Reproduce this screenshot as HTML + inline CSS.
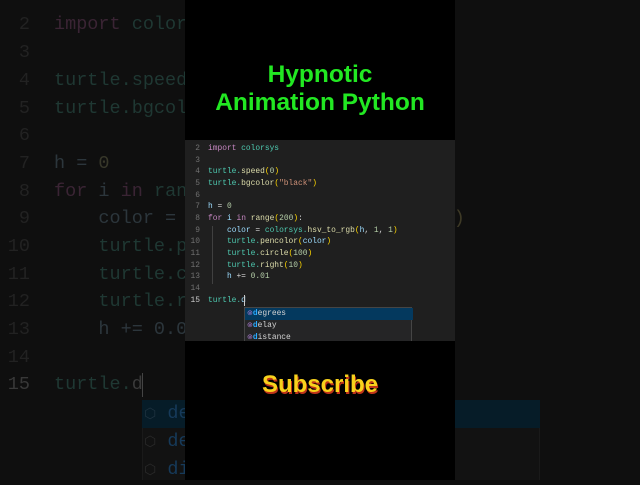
<!DOCTYPE html>
<html><head><meta charset="utf-8"><style>
*{margin:0;padding:0;box-sizing:border-box}
body{width:640px;height:480px;overflow:hidden;background:#0e0e0e;position:relative;font-family:"Liberation Mono",monospace}
.bg{position:absolute;left:0;top:0;width:640px;height:480px;background:#0f0f0f}
.bl{position:absolute;font-size:18.5px;line-height:28px;white-space:pre;height:28px}
.bn{left:0;width:30px;text-align:right;color:#222}
.bc{left:54px;color:#1f3833}
.ck{color:#3a2434}
.cw{color:#2c363c}
.cn{color:#38382a}
.cy{color:#3e3a26}
.col{position:absolute;left:185px;top:0;width:270px;height:480px;background:#000}
.panel{position:absolute;left:185px;top:140px;width:270px;height:201px;background:#1f1f1f;overflow:hidden}
.l{position:absolute;font-size:7.9px;line-height:11.7px;white-space:pre;height:12px}
.n{left:0;width:15px;text-align:right;color:#707070}
.c{left:23px;color:#4ec9b0}
.k{color:#c586c0}
.w{color:#9cdcfe}
.f{color:#dcdcaa}
.s{color:#ce9178}
.nu{color:#b5cea8}
.p{color:#ffd700}
.t{color:#d4d4d4}
.ac{position:absolute;left:59px;top:167px;width:168px;height:40px;background:#252526;border:1px solid #454545}
.ar{position:absolute;left:0;width:168px;height:12px;font-size:7.9px;line-height:12px;color:#d4d4d4;padding-left:2px}
.ar b{color:#2aaaff;font-weight:bold}
.ar i{font-style:normal;color:#b180d7;font-size:7px}
.title{position:absolute;left:185px;width:270px;text-align:center;font-family:"Liberation Sans",sans-serif;font-weight:bold;font-size:24.5px;color:#22e822;line-height:28px}
.sub{position:absolute;left:185px;top:371px;width:270px;text-align:center;font-family:"Liberation Sans",sans-serif;font-weight:bold;font-size:24px;color:#f8d21c;text-shadow:1px 2px 0 #c0341a}
</style></head><body>
<div class="bg">
<div class="bl bn" style="top:11px">2</div><div class="bl bc" style="top:11px"><span class="ck">import</span> colorsys</div>
<div class="bl bn" style="top:39px">3</div>
<div class="bl bn" style="top:67px">4</div><div class="bl bc" style="top:67px">turtle.speed(0)</div>
<div class="bl bn" style="top:95px">5</div><div class="bl bc" style="top:95px">turtle.bgcolor</div>
<div class="bl bn" style="top:122px">6</div>
<div class="bl bn" style="top:150px">7</div><div class="bl bc" style="top:150px"><span class="cw">h = </span><span class="cn">0</span></div>
<div class="bl bn" style="top:178px">8</div><div class="bl bc" style="top:178px"><span class="ck">for</span> <span class="cw">i</span> <span class="ck">in</span> range</div>
<div class="bl bn" style="top:205px">9</div><div class="bl bc" style="top:205px">    <span class="cw">color =</span>                      <span class="cn">, 1</span><span class="cy">)</span></div>
<div class="bl bn" style="top:233px">10</div><div class="bl bc" style="top:233px">    turtle.p</div>
<div class="bl bn" style="top:261px">11</div><div class="bl bc" style="top:261px">    turtle.c</div>
<div class="bl bn" style="top:288px">12</div><div class="bl bc" style="top:288px">    turtle.r</div>
<div class="bl bn" style="top:316px">13</div><div class="bl bc" style="top:316px">    <span class="cw">h += 0.0</span></div>
<div class="bl bn" style="top:344px">14</div>
<div class="bl bn" style="top:371px;color:#383838">15</div><div class="bl bc" style="top:371px">turtle.<span style="color:#3a3a3a">d</span></div>
<div style="position:absolute;left:142px;top:373px;width:1px;height:24px;background:#444"></div>
<div style="position:absolute;left:142px;top:400px;width:398px;height:80px;background:#121212;border-left:1px solid #1a1a1a;border-right:1px solid #1a1a1a"></div>
<div style="position:absolute;left:142px;top:400px;width:398px;height:28px;background:#061c28"></div>
<div class="bl" style="left:144px;top:400px;color:#163a5a"><span style="color:#1f3340;font-size:14px">⬡</span> de</div>
<div class="bl" style="left:144px;top:428px;color:#163a5a"><span style="color:#2a2a2a;font-size:14px">⬡</span> de</div>
<div class="bl" style="left:144px;top:456px;color:#163a5a"><span style="color:#2a2a2a;font-size:14px">⬡</span> di</div>
</div>
<div class="col"></div>
<div class="title" style="top:61px">Hypnotic</div>
<div class="title" style="top:89px">Animation Python</div>
<div class="panel">
<div class="l n" style="top:3px">2</div><div class="l c" style="top:3px"><span class="k">import</span> colorsys</div>
<div class="l n" style="top:15px">3</div>
<div class="l n" style="top:26px">4</div><div class="l c" style="top:26px">turtle.<span class="f">speed</span><span class="p">(</span><span class="nu">0</span><span class="p">)</span></div>
<div class="l n" style="top:38px">5</div><div class="l c" style="top:38px">turtle.<span class="f">bgcolor</span><span class="p">(</span><span class="s">"black"</span><span class="p">)</span></div>
<div class="l n" style="top:50px">6</div>
<div class="l n" style="top:61px">7</div><div class="l c" style="top:61px"><span class="w">h</span><span class="t"> = </span><span class="nu">0</span></div>
<div class="l n" style="top:73px">8</div><div class="l c" style="top:73px"><span class="k">for</span> <span class="w">i</span> <span class="k">in</span> <span class="f">range</span><span class="p">(</span><span class="nu">200</span><span class="p">)</span><span class="t">:</span></div>
<div class="l n" style="top:85px">9</div><div class="l c" style="top:85px">    <span class="w">color</span><span class="t"> = </span>colorsys.<span class="f">hsv_to_rgb</span><span class="p">(</span><span class="w">h</span><span class="t">, </span><span class="nu">1</span><span class="t">, </span><span class="nu">1</span><span class="p">)</span></div>
<div class="l n" style="top:96px">10</div><div class="l c" style="top:96px">    turtle.<span class="f">pencolor</span><span class="p">(</span><span class="w">color</span><span class="p">)</span></div>
<div class="l n" style="top:108px">11</div><div class="l c" style="top:108px">    turtle.<span class="f">circle</span><span class="p">(</span><span class="nu">100</span><span class="p">)</span></div>
<div class="l n" style="top:120px">12</div><div class="l c" style="top:120px">    turtle.<span class="f">right</span><span class="p">(</span><span class="nu">10</span><span class="p">)</span></div>
<div class="l n" style="top:131px">13</div><div class="l c" style="top:131px">    <span class="w">h</span><span class="t"> += </span><span class="nu">0.01</span></div>
<div class="l n" style="top:143px">14</div>
<div class="l n" style="top:155px;color:#ccc">15</div><div class="l c" style="top:155px">turtle.<span class="w">d</span></div>
<div style="position:absolute;left:59px;top:155px;width:1px;height:11px;background:#ccc"></div>
<div style="position:absolute;left:27px;top:86px;width:1px;height:58px;background:#404040"></div>
<div class="ac">
<div class="ar" style="top:0;background:#04395e"><i>⊚</i><b>d</b>egrees</div>
<div class="ar" style="top:12px"><i>⊚</i><b>d</b>elay</div>
<div class="ar" style="top:24px"><i>⊚</i><b>d</b>istance</div>
</div>
</div>
<div class="sub">Subscribe</div>
</body></html>
